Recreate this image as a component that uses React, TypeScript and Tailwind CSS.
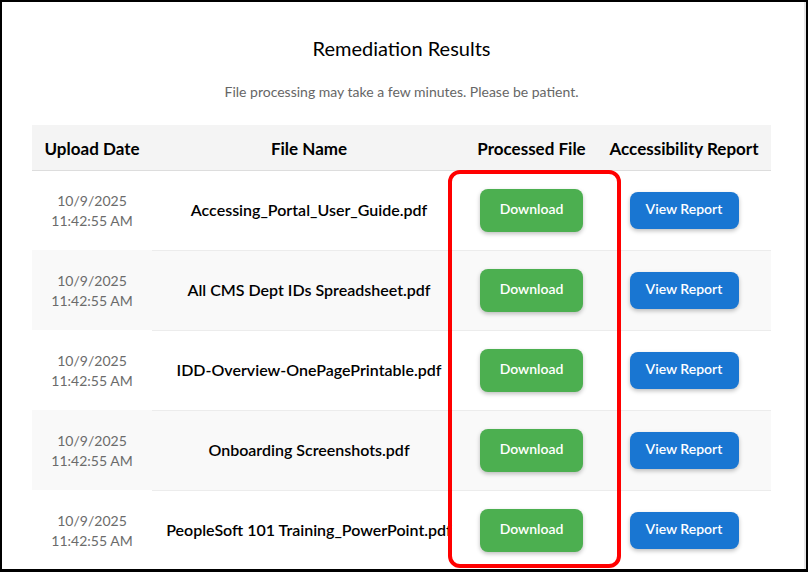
import React from 'react'

const files = [
  'Accessing_Portal_User_Guide.pdf',
  'All CMS Dept IDs Spreadsheet.pdf',
  'IDD-Overview-OnePagePrintable.pdf',
  'Onboarding Screenshots.pdf',
  'PeopleSoft 101 Training_PowerPoint.pdf',
]

export default function App() {
  return (
    <div className="h-[572px] w-[808px] overflow-hidden border-t-2 border-l-2 border-r-2 border-b-[3px] border-black bg-white font-['Lato',sans-serif]">
      <div className="flex h-full">
        <div className="flex-1 pl-[30px] pr-[33px]">
          <h2 className="pt-[32px] text-center text-[20px] leading-[28px] text-black">Remediation Results</h2>
          <p className="mt-[20px] text-center text-[14px] leading-[20px] text-[#666]">
            File processing may take a few minutes. Please be patient.
          </p>

          <div className="relative mt-[23px]">
            <table className="w-[739px] table-fixed border-collapse">
              <colgroup>
                <col className="w-[120px]" />
                <col className="w-[314px]" />
                <col className="w-[131px]" />
                <col className="w-[174px]" />
              </colgroup>
              <thead>
                <tr className="h-[45px] border-b border-[#dddddd] bg-[#f4f4f4] text-[17px] font-bold text-black">
                  <th className="whitespace-nowrap px-1 pt-[2px]">Upload Date</th>
                  <th className="whitespace-nowrap px-1 pt-[2px]">File Name</th>
                  <th className="whitespace-nowrap px-1 pt-[2px]">Processed File</th>
                  <th className="whitespace-nowrap px-1 pt-[2px]">Accessibility Report</th>
                </tr>
              </thead>
              <tbody>
                {files.map((name, i) => (
                  <tr key={name} className={i % 2 === 1 ? 'bg-[#f9f9f9]' : 'bg-white'}>
                    <td className="h-[80px] px-2 pt-[2px] text-center text-[14px] leading-[20px] text-[#6b6b6b]">
                      10/9/2025
                      <br />
                      11:42:55 AM
                    </td>
                    <td className="h-[80px] whitespace-nowrap border-b border-[#ececec] px-2 text-center text-[16px] font-semibold text-black">
                      {name}
                    </td>
                    <td className="h-[80px] border-b border-[#ececec] text-center">
                      <button className="h-[43px] w-[103px] rounded-[8px] bg-[#4caf50] pb-[3px] text-[14px] font-semibold text-white shadow-[0_2px_4px_rgba(0,0,0,0.25)]">
                        Download
                      </button>
                    </td>
                    <td className="h-[80px] border-b border-[#ececec] text-center">
                      <button className="h-[37px] w-[109px] rounded-[8px] bg-[#1976d2] pb-[3px] text-[14px] font-semibold text-white shadow-[0_2px_4px_rgba(0,0,0,0.25)]">
                        View Report
                      </button>
                    </td>
                  </tr>
                ))}
              </tbody>
            </table>

            {/* highlight around the processed file column */}
            <div className="pointer-events-none absolute left-[416px] top-[45px] h-[398px] w-[173px] rounded-[12px] border-4 border-[#ff0000]" />
          </div>
        </div>
        <div className="w-[2px] bg-[#e5e5e5]" />
      </div>
    </div>
  )
}
